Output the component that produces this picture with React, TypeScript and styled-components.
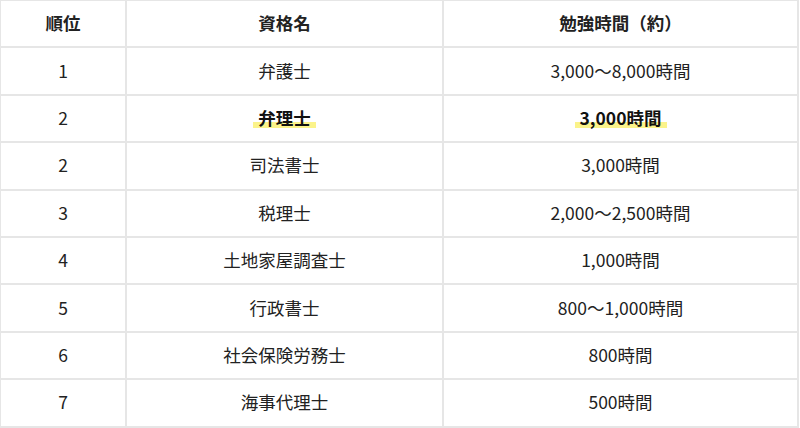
import React from 'react';
import styled, { createGlobalStyle } from 'styled-components';

const GlobalStyle = createGlobalStyle`
  html, body {
    margin: 0;
    padding: 0;
    background: #ffffff;
  }
  body {
    font-family: "Noto Sans CJK JP", "Noto Sans", sans-serif;
    color: #222;
  }
`;

type Row = {
  rank: string;
  name: string;
  hours: string;
  marked?: boolean;
};

const rows: Row[] = [
  { rank: '1', name: '弁護士', hours: '3,000〜8,000時間' },
  { rank: '2', name: '弁理士', hours: '3,000時間', marked: true },
  { rank: '2', name: '司法書士', hours: '3,000時間' },
  { rank: '3', name: '税理士', hours: '2,000〜2,500時間' },
  { rank: '4', name: '土地家屋調査士', hours: '1,000時間' },
  { rank: '5', name: '行政書士', hours: '800〜1,000時間' },
  { rank: '6', name: '社会保険労務士', hours: '800時間' },
  { rank: '7', name: '海事代理士', hours: '500時間' },
];

export default function App() {
  return (
    <>
      <GlobalStyle />
      <Table>
        <colgroup>
          <col style={{ width: 126 }} />
          <col style={{ width: 317 }} />
          <col />
        </colgroup>
        <thead>
          <tr>
            <HeadCell>順位</HeadCell>
            <HeadCell>資格名</HeadCell>
            <HeadCell>勉強時間（約）</HeadCell>
          </tr>
        </thead>
        <tbody>
          {rows.map((row, i) => (
            <tr key={i}>
              <Cell>{row.rank}</Cell>
              <Cell>{row.marked ? <Marker>{row.name}</Marker> : row.name}</Cell>
              <Cell>{row.marked ? <Marker>{row.hours}</Marker> : row.hours}</Cell>
            </tr>
          ))}
        </tbody>
      </Table>
    </>
  );
}

const Table = styled.table`
  width: 800px;
  border-collapse: collapse;
  table-layout: fixed;
  margin-top: -1px;
  margin-left: -1px;
`;

const Cell = styled.td`
  height: 45.4px;
  padding: 0 8px;
  border: 2px solid #e6e6e6;
  text-align: center;
  vertical-align: middle;
  font-size: 17.5px;
  line-height: 1.3;
  color: #222;
`;

const HeadCell = styled(Cell).attrs({ as: 'th' })`
  font-weight: 700;
`;

const Marker = styled.span`
  font-weight: 700;
  padding: 0 5px;
  color: #111;
  background: linear-gradient(transparent 68%, #fbf38a 68%, #fbf38a 92%, transparent 92%);
`;
